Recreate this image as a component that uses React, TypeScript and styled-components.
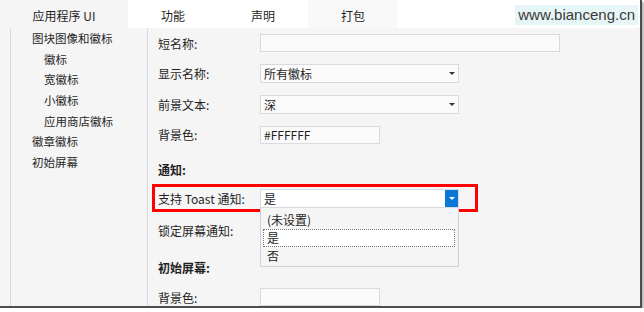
import React from 'react';
import styled, { createGlobalStyle } from 'styled-components';

const GlobalStyle = createGlobalStyle`
  html, body {
    margin: 0;
    padding: 0;
    background: #fff;
  }
  body {
    font-family: "Noto Sans CJK SC", "Liberation Sans", sans-serif;
    font-size: 12px;
    color: #1f1f1f;
  }
`;

const Frame = styled.div`
  width: 642px;
  height: 308px;
  box-sizing: border-box;
  border-right: 2px solid #4d4d4d;
  border-bottom: 2px solid #4d4d4d;
  box-shadow: 2px 2px 2px rgba(0, 0, 0, 0.3);
  background: #f5f5f5;
  display: flex;
  flex-direction: column;
  overflow: hidden;
`;

const TabBar = styled.div`
  height: 28px;
  flex-shrink: 0;
  display: flex;
  background: #fff;
`;

const Tab = styled.div<{ $width: number; $active?: boolean; $hover?: boolean }>`
  width: ${({ $width }) => $width}px;
  height: 28px;
  box-sizing: border-box;
  padding-top: 3px;
  display: flex;
  align-items: center;
  justify-content: center;
  background: ${({ $active, $hover }) => ($active ? '#f5f5f5' : $hover ? '#f9f9f9' : '#fff')};
  color: #1e1e1e;
`;

const Watermark = styled.div`
  margin: 5px 2px 0 auto;
  height: 20px;
  padding: 0 3px;
  background: #e6f5f5;
  font-family: "Liberation Sans", Arial, sans-serif;
  font-size: 15px;
  line-height: 20px;
  color: #3a3a3a;
`;

const Body = styled.div`
  flex: 1;
  min-height: 0;
  display: flex;
`;

const Nav = styled.div`
  margin-left: 10px;
  width: 138px;
  flex-shrink: 0;
  box-sizing: border-box;
  border-left: 1px solid #d8d8e4;
  border-right: 1px solid #d8d8e4;
`;

const NavItem = styled.div<{ $level: number }>`
  height: 20.7px;
  line-height: 20.7px;
  font-size: 11.5px;
  padding-left: ${({ $level }) => ($level === 1 ? 21 : 33)}px;
  white-space: nowrap;
`;

const Form = styled.div`
  flex: 1;
  padding-left: 10px;
  display: flex;
  flex-direction: column;
`;

const Row = styled.div<{ $height?: number }>`
  height: ${({ $height }) => $height ?? 30.5}px;
  flex-shrink: 0;
  display: flex;
  align-items: center;
`;

const Label = styled.div`
  width: 102px;
  flex-shrink: 0;
  white-space: nowrap;
`;

const SectionTitle = styled.div`
  height: 34px;
  flex-shrink: 0;
  box-sizing: border-box;
  padding-top: 12px;
  line-height: 16px;
  font-weight: bold;
`;

const TextBox = styled.div<{ $width: number }>`
  width: ${({ $width }) => $width}px;
  height: 18px;
  box-sizing: border-box;
  border: 1px solid #d9d9e0;
  background: #fafafa;
  padding-left: 3px;
  line-height: 16px;
`;

const SelectWrap = styled.div`
  position: relative;
`;

const SelectBox = styled.div<{ $focused?: boolean }>`
  width: 199px;
  height: 19px;
  box-sizing: border-box;
  border: 1px solid #d9d9e0;
  background: ${({ $focused }) => ($focused ? '#fff' : '#fafafa')};
  display: flex;
  align-items: center;
`;

const SelectValue = styled.div`
  flex: 1;
  padding-left: 3px;
  line-height: 17px;
`;

const ArrowButton = styled.div<{ $focused?: boolean }>`
  width: 13px;
  align-self: stretch;
  display: flex;
  align-items: center;
  justify-content: center;
  background: ${({ $focused }) => ($focused ? '#0a78d7' : 'transparent')};
  &::after {
    content: '';
    border-left: 3px solid transparent;
    border-right: 3px solid transparent;
    border-top: 3px solid ${({ $focused }) => ($focused ? '#fff' : '#333')};
  }
`;

const Highlight = styled.div`
  width: 326px;
  height: 28px;
  flex-shrink: 0;
  box-sizing: border-box;
  margin-left: -6px;
  padding-left: 3px;
  border: 3px solid #ff0000;
  display: flex;
  align-items: center;
`;

const DropList = styled.div`
  position: absolute;
  top: 100%;
  left: 0;
  z-index: 10;
  width: 199px;
  box-sizing: border-box;
  border: 1px solid #cfd0dc;
  border-top: none;
  background: #f5f5f5;
  padding: 3px 0 1px;
`;

const DropItem = styled.div<{ $focused?: boolean }>`
  height: 18px;
  box-sizing: border-box;
  margin: 0 3px 0 2px;
  padding-left: 3px;
  line-height: 16px;
  border: 1px ${({ $focused }) => ($focused ? 'dotted #777' : 'solid transparent')};
  background: ${({ $focused }) => ($focused ? '#fff' : 'transparent')};
`;

function Select({ value, focused, options }: { value: string; focused?: boolean; options?: string[] }) {
  return (
    <SelectWrap>
      <SelectBox $focused={focused}>
        <SelectValue>{value}</SelectValue>
        <ArrowButton $focused={focused} />
      </SelectBox>
      {options && (
        <DropList>
          {options.map((o) => (
            <DropItem key={o} $focused={o === value}>
              {o}
            </DropItem>
          ))}
        </DropList>
      )}
    </SelectWrap>
  );
}

const navItems = [
  { text: '图块图像和徽标', level: 1 },
  { text: '徽标', level: 2 },
  { text: '宽徽标', level: 2 },
  { text: '小徽标', level: 2 },
  { text: '应用商店徽标', level: 2 },
  { text: '徽章徽标', level: 1 },
  { text: '初始屏幕', level: 1 },
];

export default function App() {
  return (
    <>
      <GlobalStyle />
      <Frame>
        <TabBar>
          <Tab $width={128} $active>应用程序 UI</Tab>
          <Tab $width={90}>功能</Tab>
          <Tab $width={90}>声明</Tab>
          <Tab $width={90} $hover>打包</Tab>
          <Watermark>www.bianceng.cn</Watermark>
        </TabBar>
        <Body>
          <Nav>
            {navItems.map((n) => (
              <NavItem key={n.text} $level={n.level}>
                {n.text}
              </NavItem>
            ))}
          </Nav>
          <Form>
            <Row>
              <Label>短名称:</Label>
              <TextBox $width={300} />
            </Row>
            <Row>
              <Label>显示名称:</Label>
              <Select value="所有徽标" />
            </Row>
            <Row>
              <Label>前景文本:</Label>
              <Select value="深" />
            </Row>
            <Row>
              <Label>背景色:</Label>
              <TextBox $width={120}>#FFFFFF</TextBox>
            </Row>
            <SectionTitle>通知:</SectionTitle>
            <Highlight>
              <Label>支持 Toast 通知:</Label>
              <Select value="是" focused options={['(未设置)', '是', '否']} />
            </Highlight>
            <Row $height={36}>
              <Label>锁定屏幕通知:</Label>
              {/* covered by the open list above */}
              <Select value="" />
            </Row>
            <SectionTitle>初始屏幕:</SectionTitle>
            <Row>
              <Label>背景色:</Label>
              <TextBox $width={120} />
            </Row>
          </Form>
        </Body>
      </Frame>
    </>
  );
}
